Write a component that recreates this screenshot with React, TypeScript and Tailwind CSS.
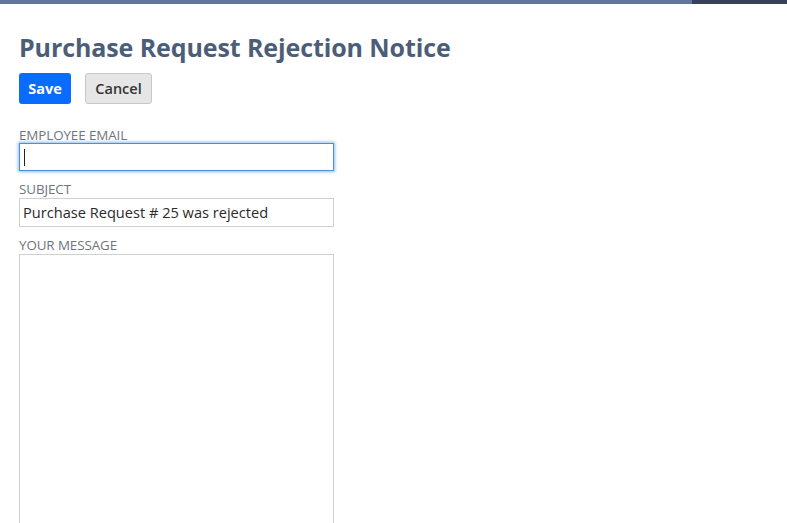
import React from 'react';

const font = { fontFamily: '"Open Sans", "Liberation Sans", sans-serif' };

const Label: React.FC<{ children: React.ReactNode }> = ({ children }) => (
  <div className="text-[13.4px] leading-[16px] uppercase text-[#6f7480] tracking-[-0.1px]">{children}</div>
);

const App: React.FC = () => {
  return (
    <div className="h-[523px] bg-white overflow-hidden" style={font}>
      <div className="flex h-[4px]">
        <div className="flex-1 bg-[#607799]" />
        <div className="w-[95px] bg-[#35425a]" />
      </div>

      <div className="px-[19px] pt-[28px]">
        <h1 className="text-[25px] leading-[30px] font-bold text-[#4c5d78] tracking-[-0.1px]">
          Purchase Request Rejection Notice
        </h1>

        <div className="flex items-center gap-[14px] mt-[11px]">
          <button className="h-[31px] w-[52px] rounded-[3px] bg-[#0a6cff] text-white text-[14.5px] font-bold">
            Save
          </button>
          <button className="h-[31px] w-[67px] rounded-[3px] bg-[#e6e6e6] border border-[#c8c8c8] text-[#333] text-[14.5px] font-semibold">
            Cancel
          </button>
        </div>

        <div className="mt-[23px] w-[315px] flex flex-col">
          <Label>Employee Email</Label>
          <div className="h-[28px] border border-[#4a8fdc] shadow-[0_0_3px_1px_rgba(74,143,220,0.6)] flex items-center pl-[4px]">
            <div className="w-[1px] h-[17px] bg-[#222]" />
          </div>

          <div className="mt-[10px]">
            <Label>Subject</Label>
          </div>
          <div className="mt-[1px] h-[29px] border border-[#cfcfcf] flex items-center px-[3px] text-[14.6px] text-[#2b2b2b]">
            Purchase Request # 25 was rejected
          </div>

          <div className="mt-[10px]">
            <Label>Your Message</Label>
          </div>
          <div className="mt-[1px] h-[300px] border border-[#cfcfcf]" />
        </div>
      </div>
    </div>
  );
};

export default App;
